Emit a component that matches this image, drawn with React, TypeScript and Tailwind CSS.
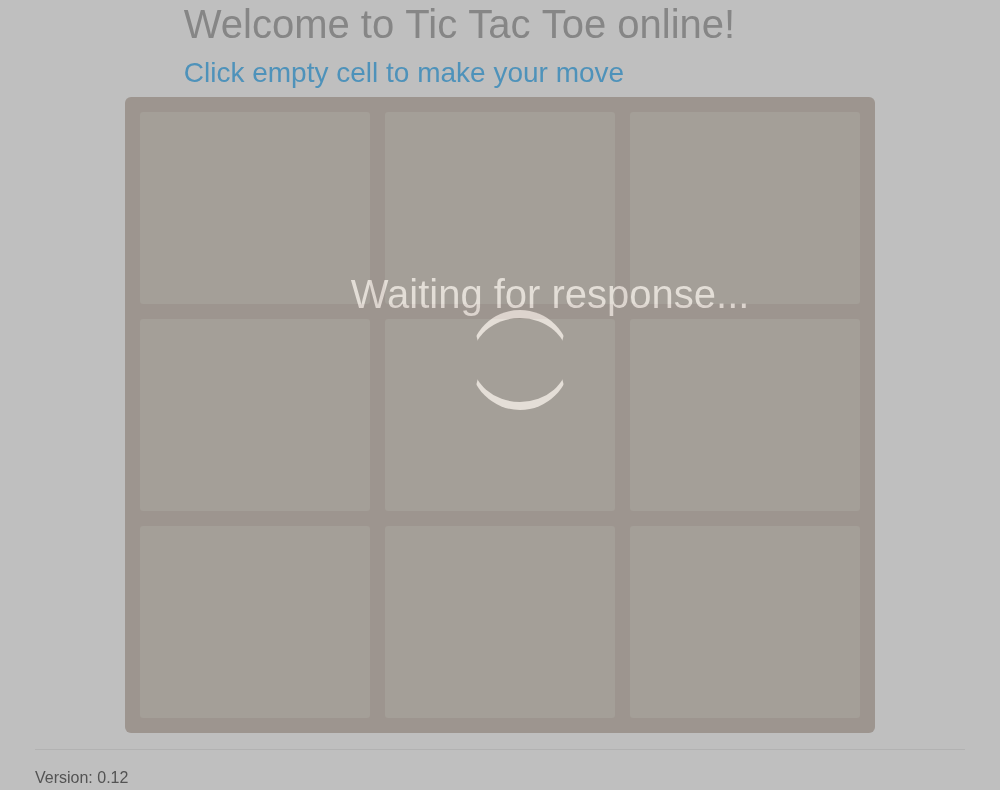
export default function App() {
  return (
    <div className="relative h-[790px] overflow-hidden bg-[#bfbfbf] font-['Liberation_Sans',Arial,sans-serif]">
      <header className="pl-[183.75px]">
        <h1 className="h-[50px] text-[40px] leading-[48px] text-[#868686]">Welcome to<span className="[word-spacing:0.74px]"> Tic Tac Toe</span> online!</h1>
        <h2 className="h-[47px] pt-[6px] text-[28px] leading-[34px] text-[#4e92ba]">Click empty cell to make your move</h2>
      </header>
      <main className="mx-auto grid h-[636px] w-[750px] grid-cols-3 grid-rows-3 gap-[15px] rounded-md bg-[#9d958f] p-[15px]">
        {Array.from({ length: 9 }, (_, i) => (
          <button key={i} aria-label={`Cell ${i + 1}`} className="rounded-[3px] bg-[#a49f98]" />
        ))}
      </main>
      <footer className="mx-[35px] mt-4 border-t border-[#b2b2b2] pt-4 text-base leading-6 text-[#535353]">Version: 0.12</footer>
      <div className="absolute top-[270px] left-[350.75px] text-[40px] leading-[48px] whitespace-nowrap text-[#3f3f3f] mix-blend-plus-lighter">Waiting for response...</div>
      <div className="absolute top-[310px] left-[470px] size-[100px] rounded-full border-x-2 border-y-8 border-x-transparent border-y-[#403f3f] mix-blend-plus-lighter" />
    </div>
  );
}
